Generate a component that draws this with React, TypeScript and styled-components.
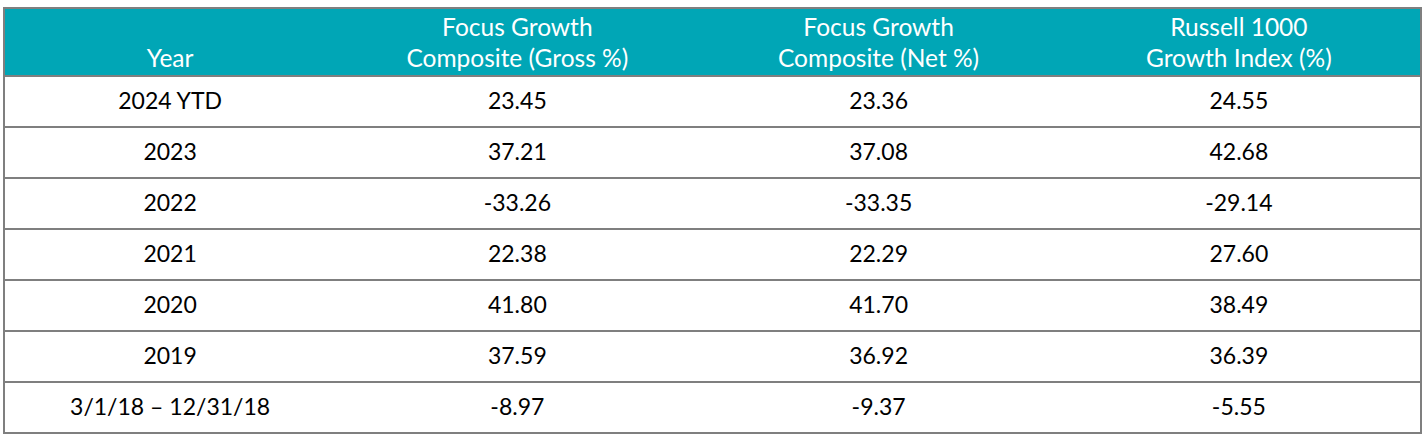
import React from "react";
import styled, { createGlobalStyle } from "styled-components";

const GlobalStyle = createGlobalStyle`
  html, body {
    margin: 0;
    padding: 0;
    background: #ffffff;
  }
`;

const rows = [
  { year: "2024 YTD", gross: "23.45", net: "23.36", index: "24.55" },
  { year: "2023", gross: "37.21", net: "37.08", index: "42.68" },
  { year: "2022", gross: "-33.26", net: "-33.35", index: "-29.14" },
  { year: "2021", gross: "22.38", net: "22.29", index: "27.60" },
  { year: "2020", gross: "41.80", net: "41.70", index: "38.49" },
  { year: "2019", gross: "37.59", net: "36.92", index: "36.39" },
  { year: "3/1/18 \u2013 12/31/18", gross: "-8.97", net: "-9.37", index: "-5.55" },
];

const Page = styled.div`
  padding: 7px 5px 0 3px;
  font-family: "Lato", "Open Sans", sans-serif;
`;

const Table = styled.table`
  width: 1419px;
  border-collapse: collapse;
  border: 2px solid #7f7f7f;
  table-layout: fixed;
`;

const HeadCell = styled.th<{ $w: number }>`
  width: ${(p) => p.$w}px;
  height: 64px;
  background: #00a6b6;
  color: #ffffff;
  font-weight: 400;
  font-size: 24.5px;
  line-height: 31px;
  text-align: center;
  vertical-align: bottom;
  padding: 0 0 2px;
  border-bottom: 2px solid #7f7f7f;
`;

const Row = styled.tr`
  height: 51px;
  border-bottom: 2px solid #7f7f7f;
`;

const Cell = styled.td`
  font-size: 23px;
  color: #000000;
  text-align: center;
  vertical-align: middle;
  padding: 0 0 3px;
`;

export default function App() {
  return (
    <Page>
      <GlobalStyle />
      <Table>
        <thead>
          <tr>
            <HeadCell $w={330}>Year</HeadCell>
            <HeadCell $w={364}>
              Focus Growth
              <br />
              Composite (Gross %)
            </HeadCell>
            <HeadCell $w={358}>
              Focus Growth
              <br />
              Composite (Net %)
            </HeadCell>
            <HeadCell $w={362}>
              Russell 1000
              <br />
              Growth Index (%)
            </HeadCell>
          </tr>
        </thead>
        <tbody>
          {rows.map((r) => (
            <Row key={r.year}>
              <Cell>{r.year}</Cell>
              <Cell>{r.gross}</Cell>
              <Cell>{r.net}</Cell>
              <Cell>{r.index}</Cell>
            </Row>
          ))}
        </tbody>
      </Table>
    </Page>
  );
}
